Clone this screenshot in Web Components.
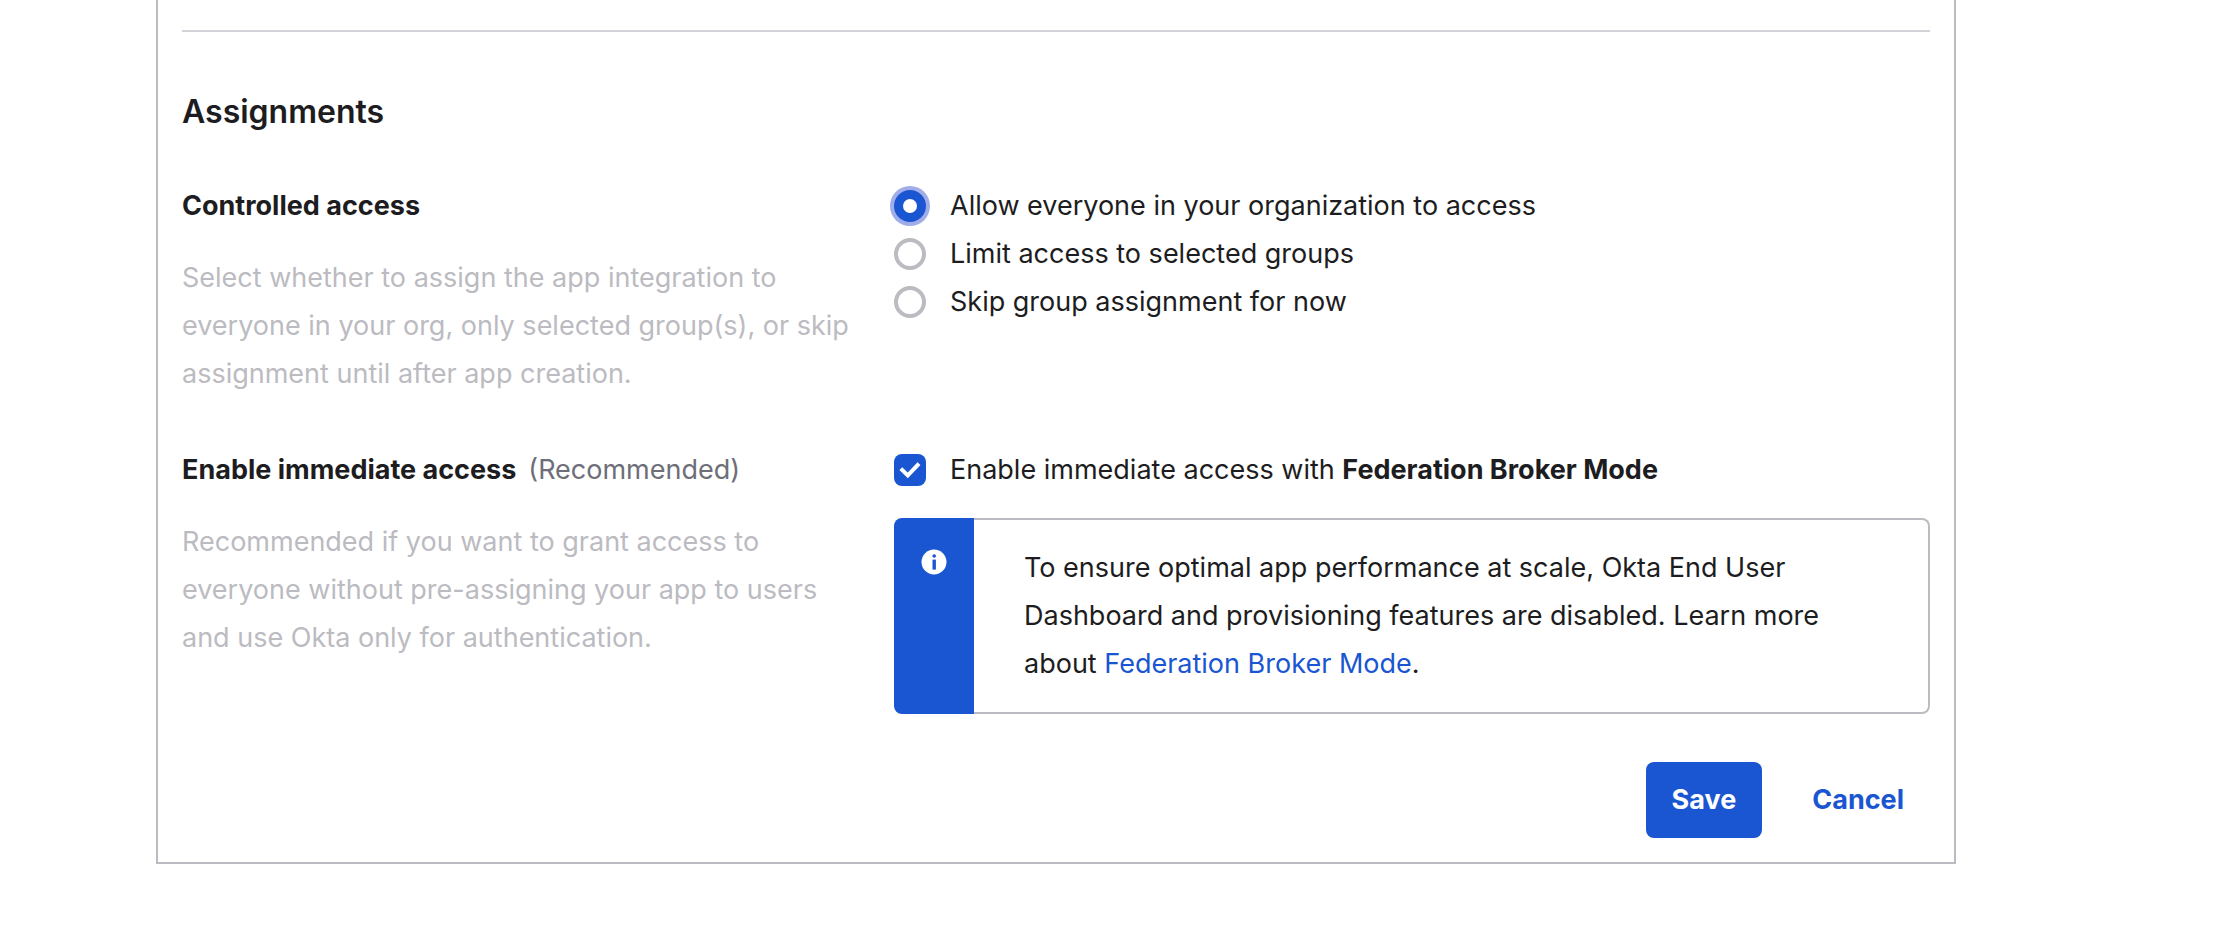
<!DOCTYPE html>
<html lang="en">
<head>
<meta charset="utf-8">
<meta name="viewport" content="width=device-width, initial-scale=1">
<title>App integration assignments</title>
<style>
  :root {
    --blue: #1a56d1;
    --ring: #a0ade8;
    --ink: #1d1d21;
    --muted: #6e6e78;
    --faint: #bbbbc1;
    --line: #d2d2d8;
  }
  body {
    margin: 0;
    background: #fff;
    color: var(--ink);
    font: 400 27px/48px Inter, "Liberation Sans", sans-serif;
  }
</style>
</head>
<body>
<settings-panel>
  <h2 slot="heading">Assignments</h2>
  <form-row>
    <span slot="title">Controlled access</span>
    <span slot="help">Select whether to assign the app integration to everyone in your org, only selected group(s), or skip assignment until after app creation.</span>
    <access-options></access-options>
  </form-row>
  <form-row>
    <span slot="title">Enable immediate access</span>
    <span slot="note">(Recommended)</span>
    <span slot="help">Recommended if you want to grant access to everyone without pre-assigning your app to users and use Okta only for authentication.</span>
    <check-field>Enable immediate access with <b>Federation Broker Mode</b></check-field>
    <info-callout>To ensure optimal app performance at scale, Okta End User Dashboard and provisioning features are disabled. Learn more about <a href="#federation-broker-mode">Federation Broker Mode</a>.</info-callout>
  </form-row>
  <action-button slot="actions" variant="primary">Save</action-button>
  <action-button slot="actions">Cancel</action-button>
</settings-panel>

<script>
  const define = (name, html) => {
    const template = document.createElement('template');
    template.innerHTML = html;
    customElements.define(name, class extends HTMLElement {
      constructor() {
        super();
        this.attachShadow({ mode: 'open' }).append(template.content.cloneNode(true));
      }
    });
  };

  define('settings-panel', `
    <style>
      :host { display: block; padding: 0 280px 0 156px; }
      section {
        border: 2px solid var(--faint);
        border-top: 0;
        padding: 30px 24px 24px;
      }
      hr { margin: 0 0 56px; border: 0; border-top: 2px solid var(--line); }
      ::slotted(h2) { margin: 0 0 46px; font-size: 32px; font-weight: 600; line-height: 48px; }
      .rows { display: grid; gap: 48px; }
      footer { display: flex; justify-content: flex-end; gap: 24px; margin-top: 48px; }
    </style>
    <section>
      <hr>
      <slot name="heading"></slot>
      <div class="rows"><slot></slot></div>
      <footer><slot name="actions"></slot></footer>
    </section>`);

  define('form-row', `
    <style>
      :host { display: grid; grid-template-columns: 712fr 1036fr; }
      .about { padding-right: 36px; }
      h3 { margin: 0 0 24px; font: inherit; display: flex; gap: 12px; }
      .title { font-weight: 700; }
      .note { color: var(--muted); }
      p { margin: 0; color: var(--faint); }
      .fields { display: flex; flex-direction: column; gap: 24px; }
    </style>
    <div class="about">
      <h3><span class="title"><slot name="title"></slot></span><span class="note"><slot name="note"></slot></span></h3>
      <p><slot name="help"></slot></p>
    </div>
    <div class="fields"><slot></slot></div>`);

  define('access-options', `
    <style>
      :host { display: block; }
      fieldset { margin: 0; padding: 0; border: 0; }
      label { display: flex; align-items: center; gap: 24px; }
      input {
        appearance: none;
        flex: none;
        box-sizing: border-box;
        width: 32px;
        height: 32px;
        margin: 0;
        border: 4px solid var(--faint);
        border-radius: 50%;
        background: #fff;
      }
      input:checked {
        border: 9px solid var(--blue);
        box-shadow: 0 0 0 4px var(--ring);
      }
    </style>
    <fieldset aria-label="Controlled access">
      <label><input type="radio" name="access" checked>Allow everyone in your organization to access</label>
      <label><input type="radio" name="access">Limit access to selected groups</label>
      <label><input type="radio" name="access">Skip group assignment for now</label>
    </fieldset>`);

  define('check-field', `
    <style>
      :host { display: block; }
      label { display: flex; align-items: center; gap: 24px; }
      .box { display: grid; flex: none; width: 32px; height: 32px; }
      input, svg { grid-area: 1 / 1; width: 32px; height: 32px; }
      input {
        appearance: none;
        box-sizing: border-box;
        margin: 0;
        border: 4px solid var(--faint);
        border-radius: 8px;
      }
      input:checked { border: 0; background: var(--blue); }
      svg { pointer-events: none; visibility: hidden; }
      input:checked + svg { visibility: visible; }
      ::slotted(b) { font-weight: 700; }
    </style>
    <label>
      <span class="box">
        <input type="checkbox" checked>
        <svg viewBox="0 0 32 32" fill="none" stroke="#fff" stroke-width="4" aria-hidden="true"><path d="M6.8 14.6 13.8 21.4 25 9.6"/></svg>
      </span>
      <span><slot></slot></span>
    </label>`);

  define('info-callout', `
    <style>
      :host { display: flex; border-radius: 8px; }
      .icon {
        flex: none;
        box-sizing: border-box;
        width: 80px;
        padding: 31px 0 0 27px;
        border-radius: 8px 0 0 8px;
        background: var(--blue);
      }
      svg { display: block; width: 26px; height: 26px; }
      p {
        flex: 1;
        margin: 0;
        padding: 24px 48px 24px 50px;
        border: 2px solid var(--faint);
        border-left: 0;
        border-radius: 0 8px 8px 0;
      }
      ::slotted(a) { color: var(--blue); text-decoration: none; }
    </style>
    <div class="icon">
      <svg viewBox="0 0 26 26" role="img" aria-label="Information">
        <circle cx="13" cy="13" r="12.5" fill="#fff"/>
        <circle cx="13.2" cy="7" r="1.8" fill="#1a56d1"/>
        <rect x="11.5" y="10.6" width="3.4" height="10" fill="#1a56d1"/>
      </svg>
    </div>
    <p><slot></slot></p>`);

  define('action-button', `
    <style>
      :host { display: block; }
      button {
        display: block;
        padding: 14px 26px;
        border: 0;
        border-radius: 8px;
        background: none;
        color: var(--blue);
        font: inherit;
        font-weight: 700;
      }
      :host([variant="primary"]) button { background: var(--blue); color: #fff; }
    </style>
    <button type="button"><slot></slot></button>`);
</script>
</body>
</html>
